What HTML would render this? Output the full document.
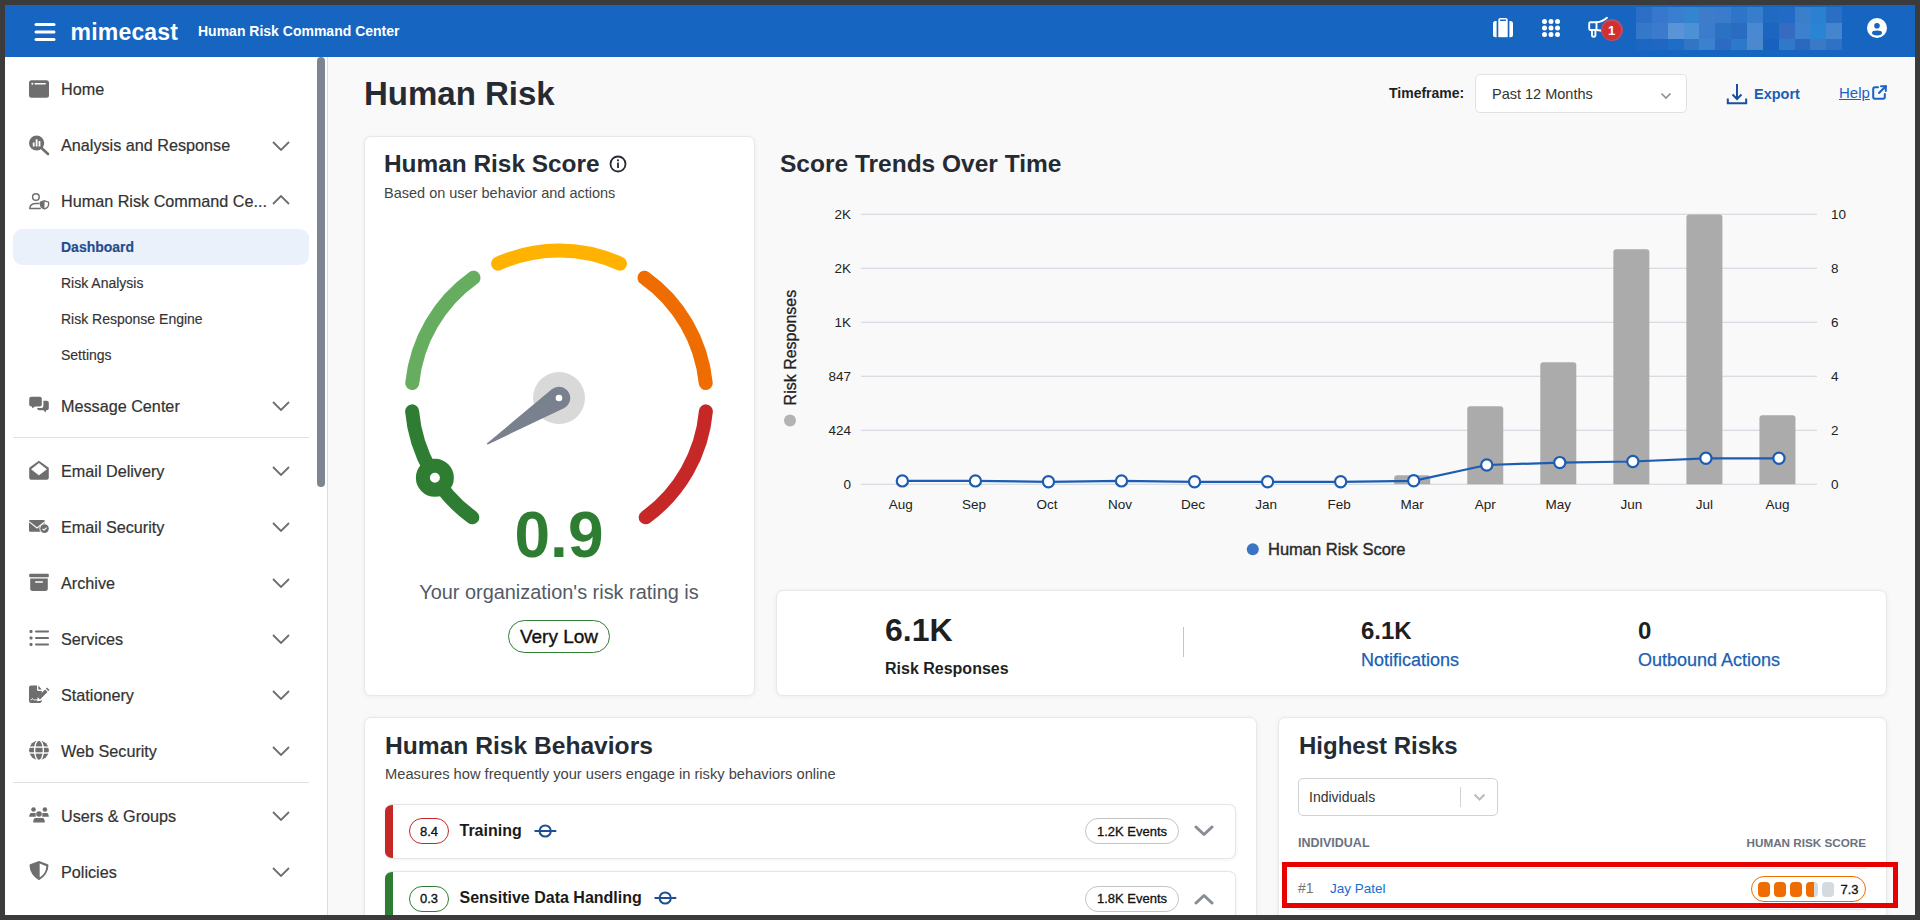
<!DOCTYPE html>
<html><head><meta charset="utf-8">
<style>
*{box-sizing:border-box;margin:0;padding:0}
html,body{width:1920px;height:920px;overflow:hidden;background:#3b3b3b;font-family:"Liberation Sans",sans-serif;color:#262b33}
.a{position:absolute;white-space:nowrap}
#hdr{position:absolute;left:5px;top:5px;width:1910px;height:52px;background:#1665c0}
#side{position:absolute;left:5px;top:57px;width:322px;height:858px;background:#fff}
#main{position:absolute;left:327px;top:57px;width:1588px;height:858px;background:#f9f9fa;border-left:1px solid #dcdcdc}
.card{position:absolute;background:#fff;border:1px solid #e6e8ec;border-radius:7px;box-shadow:0 1px 5px rgba(20,30,50,.06)}
.nav{position:absolute;left:61px;font-size:16.2px;color:#333;line-height:1;white-space:nowrap;-webkit-text-stroke:0.2px #333}
.sub{position:absolute;left:61px;font-size:14px;color:#333;line-height:1;white-space:nowrap;-webkit-text-stroke:0.15px #333}
.chev{position:absolute;left:272px;width:18px;height:10px}
.ico{position:absolute;left:29px;width:20px;height:20px}
</style></head><body>
<div id="hdr"></div>
<div id="side"></div>
<div id="main"></div>

<!-- header content -->
<svg class="a" style="left:34px;top:22px" width="22" height="20" viewBox="0 0 22 20"><g stroke="#fff" stroke-width="3" stroke-linecap="round"><line x1="2" y1="2.5" x2="20" y2="2.5"/><line x1="2" y1="10" x2="20" y2="10"/><line x1="2" y1="17.5" x2="20" y2="17.5"/></g></svg>
<div class="a" style="left:70.5px;top:15.6px;font-size:23px;font-weight:700;color:#fff;letter-spacing:0.2px;line-height:32px">mimecast</div>
<div class="a" style="left:198px;top:22px;font-size:14px;font-weight:700;color:#fff;line-height:18px">Human Risk Command Center</div>


<!-- sidebar -->
<div class="a" style="left:13px;top:229px;width:296px;height:36px;border-radius:9px;background:#eaf1fb"></div>
<div class="a" style="left:13px;top:437px;width:296px;height:1px;background:#e0e0e0"></div>
<div class="a" style="left:13px;top:782px;width:296px;height:1px;background:#e0e0e0"></div>
<div class="a" style="left:317px;top:57px;width:8px;height:430px;border-radius:4px;background:#7e8590"></div>
<!-- SIDE -->
<div class="nav" style="top:81.3px">Home</div>
<svg class="ico" style="top:79.0px" viewBox="0 0 20 20" overflow="visible"><rect x="0" y="1.2" width="20" height="17.5" rx="2.5" fill="#6e6e6e"/><circle cx="3.3" cy="4.7" r="1" fill="#fff"/><rect x="5.4" y="4" width="11.5" height="1.5" rx=".7" fill="#fff"/></svg>
<div class="nav" style="top:137.1px">Analysis and Response</div>
<svg class="ico" style="top:134.8px" viewBox="0 0 20 20" overflow="visible"><circle cx="7.6" cy="8" r="7.6" fill="#6e6e6e"/><line x1="12.5" y1="13" x2="19" y2="19" stroke="#6e6e6e" stroke-width="2.6" stroke-linecap="round"/><rect x="3.8" y="7.5" width="1.8" height="4" fill="#fff"/><rect x="6.7" y="4.3" width="1.8" height="7.2" fill="#fff"/><rect x="9.6" y="6" width="1.8" height="5.5" fill="#fff"/></svg>
<svg class="chev" style="top:140.5px" viewBox="0 0 18 10"><path d="M1 1 L9 9 L17 1" fill="none" stroke="#6e6e6e" stroke-width="1.8"/></svg>
<div class="nav" style="top:193.1px">Human Risk Command Ce...</div>
<svg class="ico" style="top:190.8px" viewBox="0 0 20 20" overflow="visible"><circle cx="6.9" cy="6" r="3.3" fill="none" stroke="#6e6e6e" stroke-width="1.5"/><path d="M10.5 12.6 H7 C3 12.6 0.8 14.5 0.8 17.4 H11.8" fill="none" stroke="#6e6e6e" stroke-width="1.5"/><path d="M15.5 9.8 L19.6 11.2 V13 C19.6 15.5 17.8 17.2 15.5 17.9 C13.2 17.2 11.4 15.5 11.4 13 V11.2 Z" fill="#fff" stroke="#6e6e6e" stroke-width="1.3"/><path d="M15.5 9.8 V17.9 C13.2 17.2 11.4 15.5 11.4 13 V11.2 Z" fill="#6e6e6e"/></svg>
<svg class="chev" style="top:195.0px" viewBox="0 0 18 10"><path d="M1 9 L9 1 L17 9" fill="none" stroke="#6e6e6e" stroke-width="1.8"/></svg>
<div class="nav" style="top:397.7px">Message Center</div>
<svg class="ico" style="top:395.4px" viewBox="0 0 20 20" overflow="visible"><path d="M0.2 3.8 Q0.2 1.8 2.2 1.8 H10.8 Q12.8 1.8 12.8 3.8 V9.4 Q12.8 11.4 10.8 11.4 H6 L3.4 13.3 L2.9 11.4 H2.2 Q0.2 11.4 0.2 9.4 Z" fill="#6e6e6e"/><path d="M14.4 5.7 H17.8 Q19.8 5.7 19.8 7.7 V13.2 Q19.8 15.2 17.8 15.2 H17.2 L16.6 17.4 L14.6 15.2 H10.2 Q8.2 15.2 8.2 13.6 V12.9 H12.4 Q14.4 12.9 14.4 10.9 Z" fill="#6e6e6e"/></svg>
<svg class="chev" style="top:401.1px" viewBox="0 0 18 10"><path d="M1 1 L9 9 L17 1" fill="none" stroke="#6e6e6e" stroke-width="1.8"/></svg>
<div class="nav" style="top:463.0px">Email Delivery</div>
<svg class="ico" style="top:460.7px" viewBox="0 0 20 20" overflow="visible"><path d="M0.2 6.8 L9.9 -0.3 L19.8 6.8 V16.8 Q19.8 18.8 17.8 18.8 H2.2 Q0.2 18.8 0.2 16.8 Z" fill="#6e6e6e"/><path d="M2.6 8.3 L9.9 2.4 L17.4 8.3 L9.9 13.9 Z" fill="#fff" stroke="#fff" stroke-width="0.8" stroke-linejoin="round"/></svg>
<svg class="chev" style="top:466.4px" viewBox="0 0 18 10"><path d="M1 1 L9 9 L17 1" fill="none" stroke="#6e6e6e" stroke-width="1.8"/></svg>
<div class="nav" style="top:519.0px">Email Security</div>
<svg class="ico" style="top:516.7px" viewBox="0 0 20 20" overflow="visible"><path d="M1 3.1 H14.9 Q15.9 3.1 15.9 4.1 V14.8 H1 Q0 14.8 0 13.8 V4.1 Q0 3.1 1 3.1 Z" fill="#6e6e6e"/><path d="M0 4.6 L8 11 L16 4.6" fill="none" stroke="#fff" stroke-width="1.1"/><circle cx="15.5" cy="11.6" r="5.1" fill="#fff"/><circle cx="15.5" cy="11.6" r="4.3" fill="#6e6e6e"/><path d="M13.5 11.8 L15 13.1 L17.6 10.6" fill="none" stroke="#fff" stroke-width="1.1"/></svg>
<svg class="chev" style="top:522.4px" viewBox="0 0 18 10"><path d="M1 1 L9 9 L17 1" fill="none" stroke="#6e6e6e" stroke-width="1.8"/></svg>
<div class="nav" style="top:574.8px">Archive</div>
<svg class="ico" style="top:572.5px" viewBox="0 0 20 20" overflow="visible"><rect x="0.2" y="0.7" width="19.6" height="3.6" rx="1" fill="#6e6e6e"/><path d="M1.2 5.6 H18.8 V15.5 Q18.8 18 16.3 18 H3.7 Q1.2 18 1.2 15.5 Z" fill="#6e6e6e"/><rect x="5.9" y="8.2" width="8.2" height="1.5" rx=".75" fill="#fff"/></svg>
<svg class="chev" style="top:578.2px" viewBox="0 0 18 10"><path d="M1 1 L9 9 L17 1" fill="none" stroke="#6e6e6e" stroke-width="1.8"/></svg>
<div class="nav" style="top:630.7px">Services</div>
<svg class="ico" style="top:628.4px" viewBox="0 0 20 20" overflow="visible"><g fill="#6e6e6e"><rect x="0.5" y="2" width="3" height="3" rx="1"/><rect x="0.5" y="8.5" width="3" height="3" rx="1"/><rect x="0.5" y="15" width="3" height="3" rx="1"/><rect x="6" y="2.6" width="14" height="1.8" rx=".9"/><rect x="6" y="9.1" width="14" height="1.8" rx=".9"/><rect x="6" y="15.6" width="14" height="1.8" rx=".9"/></g></svg>
<svg class="chev" style="top:634.1px" viewBox="0 0 18 10"><path d="M1 1 L9 9 L17 1" fill="none" stroke="#6e6e6e" stroke-width="1.8"/></svg>
<div class="nav" style="top:686.9px">Stationery</div>
<svg class="ico" style="top:684.6px" viewBox="0 0 20 20" overflow="visible"><path d="M2 0.4 H8 V4.5 Q8 6.1 9.6 6.1 H12.8 V8.3 L8.6 12.6 L8.2 16.2 L11.8 15.7 L12.8 14.8 V16.1 Q12.8 17.9 11 17.9 H1.8 Q0 17.9 0 16.1 V2.4 Q0 0.4 2 0.4 Z" fill="#6e6e6e"/><path d="M9.3 0.6 L12.7 4.5 H9.3 Z" fill="#6e6e6e"/><path d="M9.8 13.2 L17.3 5.7" stroke="#6e6e6e" stroke-width="3.4"/><path d="M18.1 4.9 L19.3 3.7" stroke="#6e6e6e" stroke-width="3.4"/><path d="M1.8 15.3 Q3 12.5 4.2 14.3 Q5 15.5 6.2 14.8 L9 15" fill="none" stroke="#fff" stroke-width="0.9"/></svg>
<svg class="chev" style="top:690.3px" viewBox="0 0 18 10"><path d="M1 1 L9 9 L17 1" fill="none" stroke="#6e6e6e" stroke-width="1.8"/></svg>
<div class="nav" style="top:742.9px">Web Security</div>
<svg class="ico" style="top:740.6px" viewBox="0 0 20 20" overflow="visible"><circle cx="10" cy="9.3" r="9.9" fill="#6e6e6e"/><g fill="none" stroke="#fff" stroke-width="1.4"><ellipse cx="10" cy="9.3" rx="4.4" ry="10.2"/><line x1="0" y1="6.1" x2="20" y2="6.1"/><line x1="0" y1="12" x2="20" y2="12"/></g></svg>
<svg class="chev" style="top:746.3px" viewBox="0 0 18 10"><path d="M1 1 L9 9 L17 1" fill="none" stroke="#6e6e6e" stroke-width="1.8"/></svg>
<div class="nav" style="top:807.5px">Users &amp; Groups</div>
<svg class="ico" style="top:805.2px" viewBox="0 0 20 20" overflow="visible"><g fill="#6e6e6e"><circle cx="4.5" cy="4.5" r="2.3"/><circle cx="15.9" cy="4.5" r="2.3"/><circle cx="10" cy="9" r="2.8"/><path d="M1.6 8 H6.6 L6.8 11.8 H0.1 Q0.3 9 1.6 8 Z"/><path d="M18.4 8 H13.4 L13.2 11.8 H19.9 Q19.7 9 18.4 8 Z"/><path d="M6 13.1 H14 Q15.6 13.6 15.9 17.6 H4.1 Q4.4 13.6 6 13.1 Z"/></g></svg>
<svg class="chev" style="top:810.9px" viewBox="0 0 18 10"><path d="M1 1 L9 9 L17 1" fill="none" stroke="#6e6e6e" stroke-width="1.8"/></svg>
<div class="nav" style="top:863.5px">Policies</div>
<svg class="ico" style="top:861.2px" viewBox="0 0 20 20" overflow="visible"><path d="M10 0 L18.8 3.3 Q19.6 3.6 19.5 4.5 Q19 14 10 19.3 Q1 14 0.5 4.5 Q0.4 3.6 1.2 3.3 Z" fill="#6e6e6e"/><path d="M10.7 2.6 L17.4 5.2 Q16.9 12.4 10.7 16.5 Z" fill="#fff"/></svg>
<svg class="chev" style="top:866.9px" viewBox="0 0 18 10"><path d="M1 1 L9 9 L17 1" fill="none" stroke="#6e6e6e" stroke-width="1.8"/></svg>
<div class="sub" style="top:240.2px;font-weight:700;color:#1f4e99">Dashboard</div>
<div class="sub" style="top:276.1px">Risk Analysis</div>
<div class="sub" style="top:311.9px">Risk Response Engine</div>
<div class="sub" style="top:348.1px">Settings</div>
<!-- /SIDE -->
<!-- MAIN -->
<div class="a" style="left:364px;top:77.4px;font-size:33px;font-weight:700;line-height:1;color:#262b33">Human Risk</div>
<div class="a" style="left:1389px;top:85.5px;font-size:14px;font-weight:700;line-height:1;color:#1f1f1f">Timeframe:</div>
<div class="a" style="left:1474.5px;top:73.5px;width:212px;height:39px;background:#fff;border:1px solid #dfe1e5;border-radius:5px"></div>
<div class="a" style="left:1492px;top:87.1px;font-size:14.5px;line-height:1;color:#333">Past 12 Months</div>
<svg class="a" style="left:1660px;top:92px" width="12" height="8" viewBox="0 0 12 8"><path d="M1.5 1.5 L6 6 L10.5 1.5" fill="none" stroke="#8a8f98" stroke-width="1.6"/></svg>
<svg class="a" style="left:1726px;top:83px" width="22" height="22" viewBox="0 0 22 22"><g fill="none" stroke="#1a4f9c" stroke-width="2"><path d="M11 1 V16"/><path d="M6.5 11.5 L11 16 L15.5 11.5" stroke-linejoin="miter"/><path d="M1.8 15.5 V20.2 H20.2 V15.5"/></g></svg>
<div class="a" style="left:1754px;top:87.1px;font-size:14.5px;font-weight:700;line-height:1;color:#1a5fb4">Export</div>
<div class="a" style="left:1839px;top:85.3px;font-size:15px;line-height:1;color:#1a63c6;text-decoration:underline">Help</div>
<svg class="a" style="left:1872px;top:85px" width="15" height="15" viewBox="0 0 15 15"><g fill="none" stroke="#1a63c6" stroke-width="2" stroke-linecap="round"><path d="M6 2.2 H3 Q1.2 2.2 1.2 4 V12 Q1.2 13.8 3 13.8 H11 Q12.8 13.8 12.8 12 V9"/><path d="M9 1.2 H13.8 V6"/><path d="M13.8 1.2 L7 8"/></g></svg>
<div class="card" style="left:363.5px;top:135.5px;width:391px;height:560px"></div>
<div class="a" style="left:384px;top:152.3px;font-size:24.4px;font-weight:700;line-height:1;color:#262b33">Human Risk Score</div>
<svg class="a" style="left:609px;top:155px" width="18" height="18" viewBox="0 0 18 18"><circle cx="9" cy="9" r="7.5" fill="none" stroke="#262b33" stroke-width="1.8"/><rect x="8.1" y="7.5" width="1.8" height="5.5" fill="#262b33"/><circle cx="9" cy="5.3" r="1.1" fill="#262b33"/></svg>
<div class="a" style="left:384px;top:186.0px;font-size:14.5px;line-height:1;color:#444">Based on user behavior and actions</div>
<svg class="a" style="left:0;top:0" width="1920" height="920" viewBox="0 0 1920 920"><path d="M472.30 517.33 A147.5 147.5 0 0 1 412.11 411.37" fill="none" stroke="#2e7d32" stroke-width="14" stroke-linecap="round"/><path d="M412.26 383.09 A147.5 147.5 0 0 1 473.56 277.77" fill="none" stroke="#66ad5f" stroke-width="14" stroke-linecap="round"/><path d="M498.07 263.67 A147.5 147.5 0 0 1 619.93 263.67" fill="none" stroke="#ffb300" stroke-width="14" stroke-linecap="round"/><path d="M644.44 277.77 A147.5 147.5 0 0 1 705.74 383.09" fill="none" stroke="#ef6c00" stroke-width="14" stroke-linecap="round"/><path d="M705.89 411.37 A147.5 147.5 0 0 1 645.70 517.33" fill="none" stroke="#c62828" stroke-width="14" stroke-linecap="round"/><circle cx="434.88" cy="477.69" r="12" fill="#fff" stroke="#2e7d32" stroke-width="14"/><circle cx="559" cy="398" r="26" fill="#d9d9d9"/><path d="M487.60 443.80 L552.28 389.93 A10.5 10.5 0 1 1 563.53 407.47 Z" fill="#7a818e" stroke="#7a818e" stroke-width="1.5" stroke-linejoin="round"/><circle cx="559" cy="398" r="3.3" fill="#fff"/></svg>
<div class="a" style="left:459px;width:200px;text-align:center;top:502.8px;font-size:64px;font-weight:700;line-height:1;color:#2e7d32">0.9</div>
<div class="a" style="left:359px;width:400px;text-align:center;top:583.3px;font-size:19.9px;line-height:1;color:#535b66">Your organization's risk rating is</div>
<div class="a" style="left:508px;top:620px;width:102px;height:33px;border:1.2px solid #2e7d32;border-radius:17px"></div>
<div class="a" style="left:459px;width:200px;text-align:center;top:626.7px;font-size:19px;line-height:1;color:#111;-webkit-text-stroke:0.35px #111">Very Low</div>
<div class="a" style="left:780px;top:152.3px;font-size:24.5px;font-weight:700;line-height:1;color:#262b33">Score Trends Over Time</div>
<svg class="a" style="left:0;top:0;font-family:'Liberation Sans'" width="1920" height="920" viewBox="0 0 1920 920"><line x1="861" y1="214.25" x2="1817" y2="214.25" stroke="#cdd3dc" stroke-width="1"/><line x1="861" y1="268.25" x2="1817" y2="268.25" stroke="#cdd3dc" stroke-width="1"/><line x1="861" y1="322.25" x2="1817" y2="322.25" stroke="#cdd3dc" stroke-width="1"/><line x1="861" y1="376.25" x2="1817" y2="376.25" stroke="#cdd3dc" stroke-width="1"/><line x1="861" y1="430.25" x2="1817" y2="430.25" stroke="#cdd3dc" stroke-width="1"/><line x1="861" y1="484.25" x2="1817" y2="484.25" stroke="#cdd3dc" stroke-width="1"/><path d="M1394.20 484.25 V478.30 Q1394.20 475.30 1397.20 475.30 H1427.20 Q1430.20 475.30 1430.20 478.30 V484.25 Z" fill="#ababab"/><path d="M1467.25 484.25 V409.30 Q1467.25 406.30 1470.25 406.30 H1500.25 Q1503.25 406.30 1503.25 409.30 V484.25 Z" fill="#ababab"/><path d="M1540.30 484.25 V365.20 Q1540.30 362.20 1543.30 362.20 H1573.30 Q1576.30 362.20 1576.30 365.20 V484.25 Z" fill="#ababab"/><path d="M1613.35 484.25 V252.20 Q1613.35 249.20 1616.35 249.20 H1646.35 Q1649.35 249.20 1649.35 252.20 V484.25 Z" fill="#ababab"/><path d="M1686.40 484.25 V217.40 Q1686.40 214.40 1689.40 214.40 H1719.40 Q1722.40 214.40 1722.40 217.40 V484.25 Z" fill="#ababab"/><path d="M1759.45 484.25 V418.20 Q1759.45 415.20 1762.45 415.20 H1792.45 Q1795.45 415.20 1795.45 418.20 V484.25 Z" fill="#ababab"/><polyline points="902.35,480.90 975.40,480.90 1048.45,481.80 1121.50,480.90 1194.55,481.80 1267.60,481.80 1340.65,481.80 1413.70,480.80 1486.75,465.00 1559.80,462.60 1632.85,461.50 1705.90,458.30 1778.95,458.30" fill="none" stroke="#1c5db3" stroke-width="2.2"/><circle cx="902.35" cy="480.90" r="5.6" fill="#fff" stroke="#1c5db3" stroke-width="2.2"/><circle cx="975.40" cy="480.90" r="5.6" fill="#fff" stroke="#1c5db3" stroke-width="2.2"/><circle cx="1048.45" cy="481.80" r="5.6" fill="#fff" stroke="#1c5db3" stroke-width="2.2"/><circle cx="1121.50" cy="480.90" r="5.6" fill="#fff" stroke="#1c5db3" stroke-width="2.2"/><circle cx="1194.55" cy="481.80" r="5.6" fill="#fff" stroke="#1c5db3" stroke-width="2.2"/><circle cx="1267.60" cy="481.80" r="5.6" fill="#fff" stroke="#1c5db3" stroke-width="2.2"/><circle cx="1340.65" cy="481.80" r="5.6" fill="#fff" stroke="#1c5db3" stroke-width="2.2"/><circle cx="1413.70" cy="480.80" r="5.6" fill="#fff" stroke="#1c5db3" stroke-width="2.2"/><circle cx="1486.75" cy="465.00" r="5.6" fill="#fff" stroke="#1c5db3" stroke-width="2.2"/><circle cx="1559.80" cy="462.60" r="5.6" fill="#fff" stroke="#1c5db3" stroke-width="2.2"/><circle cx="1632.85" cy="461.50" r="5.6" fill="#fff" stroke="#1c5db3" stroke-width="2.2"/><circle cx="1705.90" cy="458.30" r="5.6" fill="#fff" stroke="#1c5db3" stroke-width="2.2"/><circle cx="1778.95" cy="458.30" r="5.6" fill="#fff" stroke="#1c5db3" stroke-width="2.2"/><text x="851" y="219.05" text-anchor="end" font-size="13.5" fill="#222">2K</text><text x="851" y="273.05" text-anchor="end" font-size="13.5" fill="#222">2K</text><text x="851" y="327.05" text-anchor="end" font-size="13.5" fill="#222">1K</text><text x="851" y="381.05" text-anchor="end" font-size="13.5" fill="#222">847</text><text x="851" y="435.05" text-anchor="end" font-size="13.5" fill="#222">424</text><text x="851" y="489.05" text-anchor="end" font-size="13.5" fill="#222">0</text><text x="1831" y="219.05" font-size="13.5" fill="#222">10</text><text x="1831" y="273.05" font-size="13.5" fill="#222">8</text><text x="1831" y="327.05" font-size="13.5" fill="#222">6</text><text x="1831" y="381.05" font-size="13.5" fill="#222">4</text><text x="1831" y="435.05" font-size="13.5" fill="#222">2</text><text x="1831" y="489.05" font-size="13.5" fill="#222">0</text><text x="900.85" y="508.75" text-anchor="middle" font-size="13.5" fill="#222">Aug</text><text x="973.90" y="508.75" text-anchor="middle" font-size="13.5" fill="#222">Sep</text><text x="1046.95" y="508.75" text-anchor="middle" font-size="13.5" fill="#222">Oct</text><text x="1120.00" y="508.75" text-anchor="middle" font-size="13.5" fill="#222">Nov</text><text x="1193.05" y="508.75" text-anchor="middle" font-size="13.5" fill="#222">Dec</text><text x="1266.10" y="508.75" text-anchor="middle" font-size="13.5" fill="#222">Jan</text><text x="1339.15" y="508.75" text-anchor="middle" font-size="13.5" fill="#222">Feb</text><text x="1412.20" y="508.75" text-anchor="middle" font-size="13.5" fill="#222">Mar</text><text x="1485.25" y="508.75" text-anchor="middle" font-size="13.5" fill="#222">Apr</text><text x="1558.30" y="508.75" text-anchor="middle" font-size="13.5" fill="#222">May</text><text x="1631.35" y="508.75" text-anchor="middle" font-size="13.5" fill="#222">Jun</text><text x="1704.40" y="508.75" text-anchor="middle" font-size="13.5" fill="#222">Jul</text><text x="1777.45" y="508.75" text-anchor="middle" font-size="13.5" fill="#222">Aug</text><text transform="translate(795.9 347.6) rotate(-90)" text-anchor="middle" font-size="16" fill="#222" stroke="#222" stroke-width="0.3">Risk Responses</text><circle cx="790" cy="420.6" r="6" fill="#b3b3b3"/><circle cx="1252.8" cy="549.2" r="6" fill="#3a75c4"/></svg>
<div class="a" style="left:1268px;top:541.0px;font-size:16.5px;line-height:1;color:#2a2a2a;-webkit-text-stroke:0.4px #2a2a2a">Human Risk Score</div>
<div class="card" style="left:775.5px;top:589.5px;width:1111px;height:106px"></div>
<div class="a" style="left:885px;top:613.9px;font-size:32px;font-weight:700;line-height:1;color:#1f1f1f">6.1K</div>
<div class="a" style="left:885px;top:660.7px;font-size:16px;font-weight:700;line-height:1;color:#1f1f1f">Risk Responses</div>
<div class="a" style="left:1183px;top:627px;width:1px;height:30px;background:#c4c4c4"></div>
<div class="a" style="left:1361px;top:618.5px;font-size:24px;font-weight:700;line-height:1;color:#1f1f1f">6.1K</div>
<div class="a" style="left:1361px;top:650.9px;font-size:18px;line-height:1;color:#1a5fb4;-webkit-text-stroke:0.25px #1a5fb4">Notifications</div>
<div class="a" style="left:1638px;top:618.5px;font-size:24px;font-weight:700;line-height:1;color:#1f1f1f">0</div>
<div class="a" style="left:1638px;top:650.9px;font-size:18px;line-height:1;color:#1a5fb4;-webkit-text-stroke:0.25px #1a5fb4">Outbound Actions</div>
<svg class="a" style="left:1492px;top:17px" width="22" height="21" viewBox="0 0 22 21"><g fill="#fff"><path d="M1 6.5 Q1 4 3.5 4 H4.6 V20.2 H3.5 Q1 20.2 1 17.7 Z"/><path d="M17.4 4 H18.5 Q21 4 21 6.5 V17.7 Q21 20.2 18.5 20.2 H17.4 Z"/><path d="M6.3 4 V3 Q6.3 1 8.3 1 H13.7 Q15.7 1 15.7 3 V4 Z M8 4 H14 V3 Q14 2.6 13.6 2.6 H8.4 Q8 2.6 8 3 Z"/><rect x="6.3" y="4" width="9.4" height="16.2"/></g></svg>
<svg class="a" style="left:1542px;top:19px" width="18" height="18" viewBox="0 0 18 18"><g fill="#fff"><circle cx="2.5" cy="2.5" r="2.5"/><circle cx="2.5" cy="9.0" r="2.5"/><circle cx="2.5" cy="15.5" r="2.5"/><circle cx="9.0" cy="2.5" r="2.5"/><circle cx="9.0" cy="9.0" r="2.5"/><circle cx="9.0" cy="15.5" r="2.5"/><circle cx="15.5" cy="2.5" r="2.5"/><circle cx="15.5" cy="9.0" r="2.5"/><circle cx="15.5" cy="15.5" r="2.5"/></g></svg>
<svg class="a" style="left:1586px;top:14px" width="24" height="26" viewBox="0 0 24 26"><g fill="none" stroke="#fff" stroke-width="1.9" stroke-linejoin="round" stroke-linecap="round"><path d="M4.5 8.3 H10.5 V16 H4.5 Q3.2 16 3.2 14.7 V9.6 Q3.2 8.3 4.5 8.3 Z"/><path d="M10.5 8.3 Q16 8 21 3.8"/><path d="M10.5 16 L16 16.8"/><path d="M6 16 V21.3 Q6 22.8 7.7 22.8 Q9.4 22.8 9.4 21.3 V16"/></g></svg>
<div class="a" style="left:1600.6px;top:19.4px;width:22px;height:22px;border-radius:11px;background:#b84d6e"></div>
<div class="a" style="left:1602.2px;top:21px;width:18.8px;height:18.8px;border-radius:9.4px;background:#d32f2f"></div>
<div class="a" style="left:1601.6px;width:20px;text-align:center;top:24.1px;font-size:13px;font-weight:700;line-height:1;color:#fff">1</div>
<div class="a" style="left:1636.00px;top:7px;width:15.9px;height:16px;background:#2d6fc6"></div>
<div class="a" style="left:1651.85px;top:7px;width:15.9px;height:16px;background:#3878cc"></div>
<div class="a" style="left:1667.70px;top:7px;width:15.9px;height:16px;background:#3a7fcf"></div>
<div class="a" style="left:1683.55px;top:7px;width:15.9px;height:16px;background:#3584d0"></div>
<div class="a" style="left:1699.40px;top:7px;width:15.9px;height:16px;background:#3e7bc9"></div>
<div class="a" style="left:1715.25px;top:7px;width:15.9px;height:16px;background:#3a7bcb"></div>
<div class="a" style="left:1731.10px;top:7px;width:15.9px;height:16px;background:#2e74c8"></div>
<div class="a" style="left:1746.95px;top:7px;width:15.9px;height:16px;background:#387ccc"></div>
<div class="a" style="left:1762.80px;top:7px;width:15.9px;height:16px;background:#216ac2"></div>
<div class="a" style="left:1778.65px;top:7px;width:15.9px;height:16px;background:#236ac6"></div>
<div class="a" style="left:1794.50px;top:7px;width:15.9px;height:16px;background:#3b7eca"></div>
<div class="a" style="left:1810.35px;top:7px;width:15.9px;height:16px;background:#2b80d0"></div>
<div class="a" style="left:1826.20px;top:7px;width:15.9px;height:16px;background:#2a6fc4"></div>
<div class="a" style="left:1636.00px;top:23px;width:15.9px;height:16px;background:#3478ca"></div>
<div class="a" style="left:1651.85px;top:23px;width:15.9px;height:16px;background:#3b7acc"></div>
<div class="a" style="left:1667.70px;top:23px;width:15.9px;height:16px;background:#5a93d6"></div>
<div class="a" style="left:1683.55px;top:23px;width:15.9px;height:16px;background:#4c90d6"></div>
<div class="a" style="left:1699.40px;top:23px;width:15.9px;height:16px;background:#3b7dcc"></div>
<div class="a" style="left:1715.25px;top:23px;width:15.9px;height:16px;background:#2b72c3"></div>
<div class="a" style="left:1731.10px;top:23px;width:15.9px;height:16px;background:#2a6cc2"></div>
<div class="a" style="left:1746.95px;top:23px;width:15.9px;height:16px;background:#4a88d1"></div>
<div class="a" style="left:1762.80px;top:23px;width:15.9px;height:16px;background:#1d66bf"></div>
<div class="a" style="left:1778.65px;top:23px;width:15.9px;height:16px;background:#356bc0"></div>
<div class="a" style="left:1794.50px;top:23px;width:15.9px;height:16px;background:#3d80cd"></div>
<div class="a" style="left:1810.35px;top:23px;width:15.9px;height:16px;background:#2a84d4"></div>
<div class="a" style="left:1826.20px;top:23px;width:15.9px;height:16px;background:#4585ce"></div>
<div class="a" style="left:1636.00px;top:39px;width:15.9px;height:11px;background:#1d66c2"></div>
<div class="a" style="left:1651.85px;top:39px;width:15.9px;height:11px;background:#1f67c3"></div>
<div class="a" style="left:1667.70px;top:39px;width:15.9px;height:11px;background:#1e6dc6"></div>
<div class="a" style="left:1683.55px;top:39px;width:15.9px;height:11px;background:#3474c4"></div>
<div class="a" style="left:1699.40px;top:39px;width:15.9px;height:11px;background:#3b82ce"></div>
<div class="a" style="left:1715.25px;top:39px;width:15.9px;height:11px;background:#2d6ac4"></div>
<div class="a" style="left:1731.10px;top:39px;width:15.9px;height:11px;background:#2c79cc"></div>
<div class="a" style="left:1746.95px;top:39px;width:15.9px;height:11px;background:#4d88cd"></div>
<div class="a" style="left:1762.80px;top:39px;width:15.9px;height:11px;background:#1862bf"></div>
<div class="a" style="left:1778.65px;top:39px;width:15.9px;height:11px;background:#3079c8"></div>
<div class="a" style="left:1794.50px;top:39px;width:15.9px;height:11px;background:#2b68bf"></div>
<div class="a" style="left:1810.35px;top:39px;width:15.9px;height:11px;background:#3a79c8"></div>
<div class="a" style="left:1826.20px;top:39px;width:15.9px;height:11px;background:#2f72c4"></div>
<svg class="a" style="left:1867px;top:18px" width="20" height="20" viewBox="0 0 20 20"><circle cx="10" cy="10" r="10" fill="#fff"/><circle cx="10" cy="7.8" r="2.8" fill="#1665c0"/><ellipse cx="10" cy="15" rx="5" ry="2.4" fill="#1665c0"/></svg>
<div class="card" style="left:363.5px;top:716.5px;width:893px;height:260px"></div>
<div class="a" style="left:385px;top:733.8px;font-size:24.6px;font-weight:700;line-height:1;color:#262b33">Human Risk Behaviors</div>
<div class="a" style="left:385px;top:767.1px;font-size:14.7px;line-height:1;color:#444">Measures how frequently your users engage in risky behaviors online</div>
<div class="a" style="left:384.5px;top:803.8px;width:851px;height:55.6px;background:#fff;border:1px solid #e3e5e8;border-left:none;border-radius:7px;overflow:hidden;box-shadow:0 1px 4px rgba(20,30,50,.06)"><div style="position:absolute;left:0;top:-1px;width:8px;height:58px;background:#c62828"></div></div>
<div class="a" style="left:409px;top:818.3px;width:40px;height:26px;border:1.2px solid #c62828;border-radius:13px"></div>
<div class="a" style="left:409px;width:40px;text-align:center;top:825.1px;font-size:13px;font-weight:400;-webkit-text-stroke:0.35px #111;line-height:1;color:#111">8.4</div>
<div class="a" style="left:459.5px;top:823.2px;font-size:16px;font-weight:700;line-height:1;color:#1a1a1a">Training</div>
<svg class="a" style="left:533.5px;top:822.8px" width="23" height="16" viewBox="0 0 23 16"><circle cx="11.2" cy="8" r="5.6" fill="none" stroke="#1d4f91" stroke-width="2"/><line x1="0.5" y1="8" x2="22.3" y2="8" stroke="#1d4f91" stroke-width="2"/></svg>
<div class="a" style="left:1085px;top:818.3px;width:94px;height:26px;border:1px solid #c4c4c4;border-radius:13px"></div>
<div class="a" style="left:1085px;width:94px;text-align:center;top:824.5px;font-size:13px;font-weight:400;-webkit-text-stroke:0.3px #111;line-height:1;color:#111">1.2K Events</div>
<svg class="a" style="left:1194px;top:824.8px" width="20" height="12" viewBox="0 0 20 12"><path d="M2 2 L10 9.5 L18 2" fill="none" stroke="#878d96" stroke-width="3" stroke-linecap="round" stroke-linejoin="round"/></svg>
<div class="a" style="left:384.5px;top:871px;width:851px;height:55.6px;background:#fff;border:1px solid #e3e5e8;border-left:none;border-radius:7px;overflow:hidden;box-shadow:0 1px 4px rgba(20,30,50,.06)"><div style="position:absolute;left:0;top:-1px;width:8px;height:58px;background:#2e7d32"></div></div>
<div class="a" style="left:409px;top:885.5px;width:40px;height:26px;border:1.2px solid #2e7d32;border-radius:13px"></div>
<div class="a" style="left:409px;width:40px;text-align:center;top:892.3px;font-size:13px;font-weight:400;-webkit-text-stroke:0.35px #111;line-height:1;color:#111">0.3</div>
<div class="a" style="left:459.5px;top:890.4px;font-size:16px;font-weight:700;line-height:1;color:#1a1a1a">Sensitive Data Handling</div>
<svg class="a" style="left:653.5px;top:890px" width="23" height="16" viewBox="0 0 23 16"><circle cx="11.2" cy="8" r="5.6" fill="none" stroke="#1d4f91" stroke-width="2"/><line x1="0.5" y1="8" x2="22.3" y2="8" stroke="#1d4f91" stroke-width="2"/></svg>
<div class="a" style="left:1085px;top:885.5px;width:94px;height:26px;border:1px solid #c4c4c4;border-radius:13px"></div>
<div class="a" style="left:1085px;width:94px;text-align:center;top:891.7px;font-size:13px;font-weight:400;-webkit-text-stroke:0.3px #111;line-height:1;color:#111">1.8K Events</div>
<svg class="a" style="left:1194px;top:892.5px" width="20" height="12" viewBox="0 0 20 12"><path d="M2 10 L10 2.5 L18 10" fill="none" stroke="#878d96" stroke-width="3" stroke-linecap="round" stroke-linejoin="round"/></svg>
<div class="card" style="left:1277.5px;top:716.5px;width:609px;height:260px"></div>
<div class="a" style="left:1299px;top:733.7px;font-size:24px;font-weight:700;line-height:1;color:#262b33">Highest Risks</div>
<div class="a" style="left:1298px;top:778px;width:200px;height:38px;border:1px solid #cfd2d6;border-radius:5px;background:#fff"></div>
<div class="a" style="left:1309px;top:789.8px;font-size:14px;line-height:1;color:#333">Individuals</div>
<div class="a" style="left:1460px;top:787px;width:1px;height:20px;background:#cfd2d6"></div>
<svg class="a" style="left:1472.5px;top:793px" width="13" height="9" viewBox="0 0 13 9"><path d="M1.5 1.5 L6.5 6.5 L11.5 1.5" fill="none" stroke="#bdbdbd" stroke-width="2.2"/></svg>
<div class="a" style="left:1298px;top:836.7px;font-size:12.5px;font-weight:700;line-height:1;color:#6b7280">INDIVIDUAL</div>
<div class="a" style="right:54px;top:837.4px;font-size:11.7px;font-weight:700;line-height:1;color:#6b7280">HUMAN RISK SCORE</div>
<div class="a" style="left:1298px;top:868px;width:568px;height:1px;background:#e3e6ea"></div>
<div class="a" style="left:1298px;top:909px;width:568px;height:1px;background:#e3e6ea"></div>
<div class="a" style="left:1298px;top:881.1px;font-size:14px;line-height:1;color:#757575">#1</div>
<div class="a" style="left:1330px;top:881.6px;font-size:13.5px;line-height:1;color:#1a6bd0">Jay Patel</div>
<div class="a" style="left:1751px;top:876px;width:115px;height:26px;border:1.2px solid #ef6c00;border-radius:13px;background:#fff"></div>
<div class="a" style="left:1758px;top:882px;width:12px;height:14.6px;border-radius:4px;background:#ef6c00"></div>
<div class="a" style="left:1774px;top:882px;width:12px;height:14.6px;border-radius:4px;background:#ef6c00"></div>
<div class="a" style="left:1790px;top:882px;width:12px;height:14.6px;border-radius:4px;background:#ef6c00"></div>
<div class="a" style="left:1806px;top:882px;width:12px;height:14.6px;border-radius:4px;background:linear-gradient(90deg,#ef6c00 0,#ef6c00 8px,#d5dae1 8px)"></div>
<div class="a" style="left:1822px;top:882px;width:12px;height:14.6px;border-radius:4px;background:#d5dae1"></div>
<div class="a" style="left:1840.5px;top:882.7px;font-size:13px;font-weight:400;-webkit-text-stroke:0.3px #111;line-height:1;color:#111">7.3</div>
<div class="a" style="left:1282px;top:862px;width:616px;height:46px;border:5px solid #e60000"></div>
<div class="a" style="left:0;top:915px;width:1920px;height:5px;background:#3b3b3b"></div>
<div class="a" style="left:1915px;top:0;width:5px;height:920px;background:#3b3b3b"></div>
<!-- /MAIN -->
</body></html>
